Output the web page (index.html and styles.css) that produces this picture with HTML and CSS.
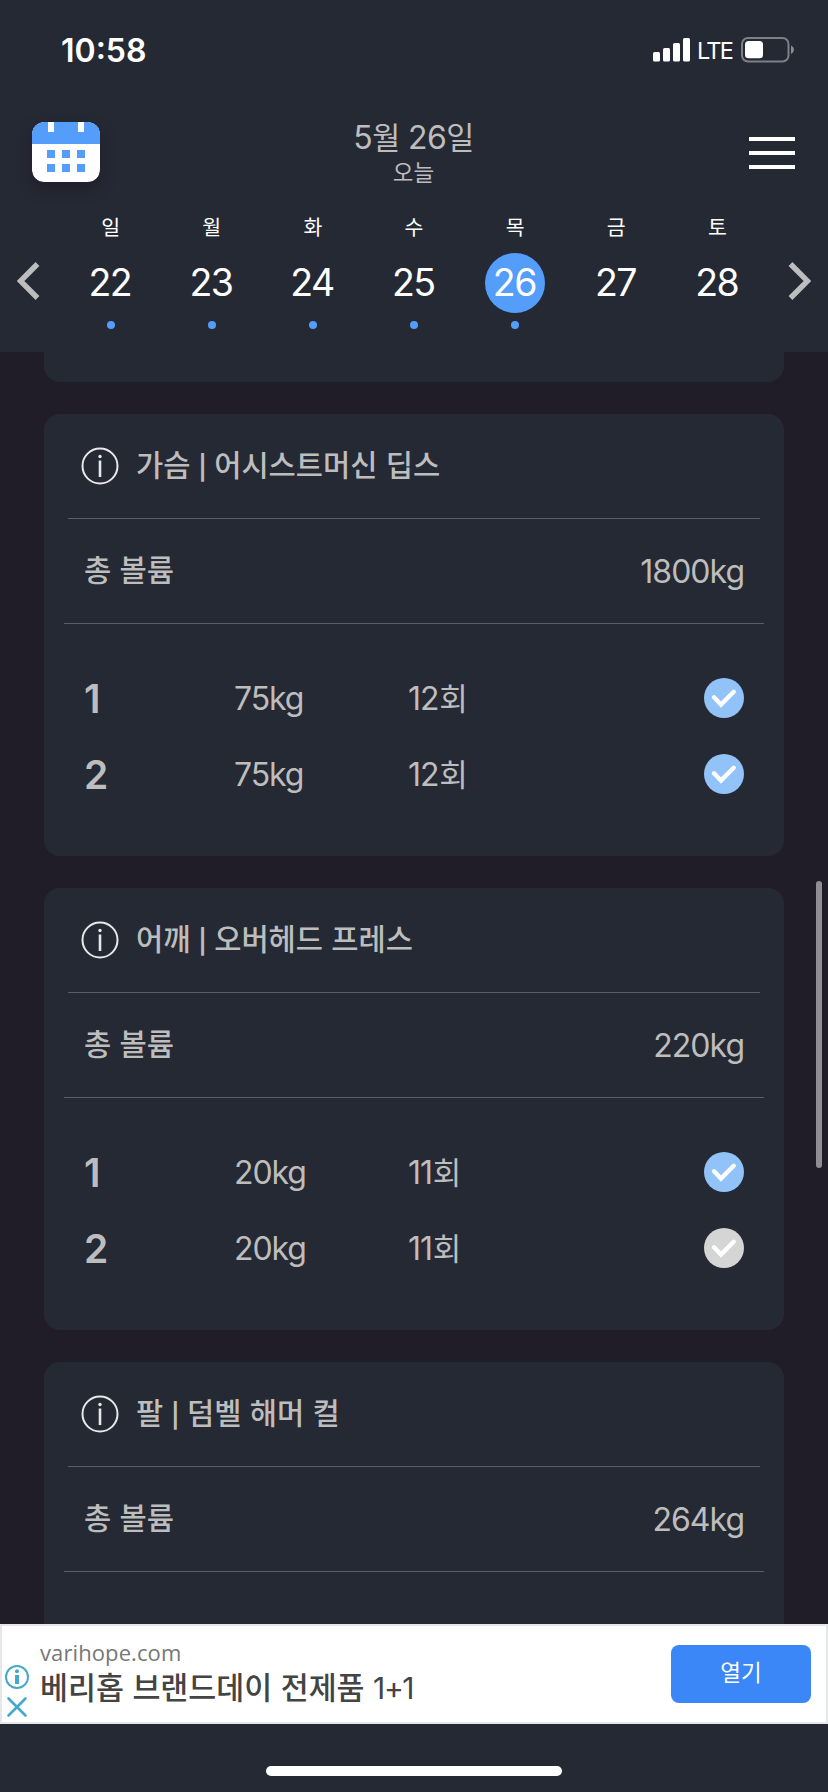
FILE: index.html
```html
<!DOCTYPE html>
<html lang="ko">
<head>
    <meta charset="utf-8">
    <title>운동 기록</title>
    <link rel="stylesheet" href="styles.css">
</head>
<body>
<svg class="defs" width="0" height="0">
    <symbol id="info" viewBox="0 0 40 40">
        <circle cx="20" cy="20" r="17.5" fill="none" stroke="#e8e8ea" stroke-width="2"/>
        <circle cx="20" cy="10.5" r="1.7" fill="#e8e8ea"/>
        <path d="M20 14.5V31" stroke="#e8e8ea" stroke-width="2.6"/>
    </symbol>
    <symbol id="check" viewBox="0 0 40 40">
        <circle cx="20" cy="20" r="20" fill="currentColor"/>
        <path d="M10 19.3L17 26.5L29.7 13.8" fill="none" stroke="#fff" stroke-width="4.4" stroke-linecap="round"/>
    </symbol>
</svg>

<div class="app">
    <header class="header">
        <div class="status">
            <span class="time">10:58</span>
            <div class="status-right">
                <svg width="38" height="24" viewBox="0 0 38 24" fill="#fff">
                    <rect x="0" y="14" width="7" height="9.5" rx="1.5"/>
                    <rect x="10" y="10" width="7" height="13.5" rx="1.5"/>
                    <rect x="20" y="5" width="7" height="18.5" rx="1.5"/>
                    <rect x="30" y="0" width="7" height="23.5" rx="1.5"/>
                </svg>
                <span class="lte">LTE</span>
                <svg width="54" height="26" viewBox="0 0 54 26">
                    <rect x="1" y="1" width="46.5" height="23.5" rx="6" fill="none" stroke="#7d8087" stroke-width="2"/>
                    <rect x="4" y="4" width="18" height="17.3" rx="3.5" fill="#fff"/>
                    <path d="M50 8.5Q53 10 53 12.8T50 17Z" fill="#8b8e94"/>
                </svg>
            </div>
        </div>

        <div class="titlebar">
            <svg class="cal" width="68" height="60" viewBox="0 0 68 60">
                <rect width="68" height="60" rx="12" fill="#fff"/>
                <path d="M0 22V12A12 12 0 0 1 12 0H56A12 12 0 0 1 68 12V22Z" fill="#549dfb"/>
                <path d="M16 0h6v10h-6zM46 0h6v10h-6z" fill="#fff"/>
                <path d="M15 28h8v8h-8zM30 28h8v8h-8zM45 28h8v8h-8zM15 42h8v8h-8zM30 42h8v8h-8zM45 42h8v8h-8z" fill="#549dfb"/>
            </svg>
            <div class="title">
                <div class="date">5<span class="ko">월</span> 26<span class="ko">일</span></div>
                <div class="today">오늘</div>
            </div>
            <svg class="menu" width="46" height="34" viewBox="0 0 46 34">
                <path d="M0 3H46M0 17H46M0 31H46" stroke="#fff" stroke-width="4"/>
            </svg>
        </div>

        <div class="week">
            <svg class="arrow" width="24" height="38" viewBox="0 0 24 38"><path d="M20.5 2L3.5 19L20.5 36" fill="none" stroke="#bdbdbd" stroke-width="5.4"/></svg>
            <div class="days">
                <div class="day"><span class="name">일</span><span class="num">22</span><i class="dot"></i></div>
                <div class="day"><span class="name">월</span><span class="num">23</span><i class="dot"></i></div>
                <div class="day"><span class="name">화</span><span class="num">24</span><i class="dot"></i></div>
                <div class="day"><span class="name">수</span><span class="num">25</span><i class="dot"></i></div>
                <div class="day"><span class="name">목</span><span class="num on">26</span><i class="dot"></i></div>
                <div class="day"><span class="name">금</span><span class="num">27</span></div>
                <div class="day"><span class="name">토</span><span class="num">28</span></div>
            </div>
            <svg class="arrow" width="24" height="38" viewBox="0 0 24 38"><path d="M3.5 2L20.5 19L3.5 36" fill="none" stroke="#bdbdbd" stroke-width="5.4"/></svg>
        </div>
    </header>

    <main class="list">
        <section class="card prev"></section>

        <section class="card">
            <div class="card-head"><svg class="info"><use href="#info"/></svg><h2>가슴 <span class="bar">|</span> 어시스트머신 딥스</h2></div>
            <div class="volume"><span class="label">총 볼륨</span><span class="value">1800kg</span></div>
            <div class="sets">
                <div class="set"><b>1</b><span>75kg</span><span>12<span class="ko">회</span></span><svg class="check"><use href="#check"/></svg></div>
                <div class="set"><b>2</b><span>75kg</span><span>12<span class="ko">회</span></span><svg class="check"><use href="#check"/></svg></div>
            </div>
        </section>

        <section class="card">
            <div class="card-head"><svg class="info"><use href="#info"/></svg><h2>어깨 <span class="bar">|</span> 오버헤드 프레스</h2></div>
            <div class="volume"><span class="label">총 볼륨</span><span class="value">220kg</span></div>
            <div class="sets">
                <div class="set"><b>1</b><span>20kg</span><span>11<span class="ko">회</span></span><svg class="check"><use href="#check"/></svg></div>
                <div class="set"><b>2</b><span>20kg</span><span>11<span class="ko">회</span></span><svg class="check off"><use href="#check"/></svg></div>
            </div>
        </section>

        <section class="card">
            <div class="card-head"><svg class="info"><use href="#info"/></svg><h2>팔 <span class="bar">|</span> 덤벨 해머 컬</h2></div>
            <div class="volume"><span class="label">총 볼륨</span><span class="value">264kg</span></div>
            <div class="sets"></div>
        </section>
        <div class="scrollbar"></div>
    </main>

    <aside class="ad">
        <div class="ad-marks">
            <svg width="24" height="24" viewBox="0 0 24 24">
                <circle cx="12" cy="12" r="11" fill="none" stroke="#46a9cb" stroke-width="2"/>
                <circle cx="12" cy="6.3" r="2" fill="#46a9cb"/>
                <path d="M12 10V19" stroke="#46a9cb" stroke-width="4"/>
            </svg>
            <svg width="24" height="24" viewBox="0 0 24 24"><path d="M3.5 3.500L20.500 20.500M20.500 3.500L3.500 20.500" stroke="#46a9cb" stroke-width="2.600" stroke-linecap="round"/></svg>
        </div>
        <div class="ad-text">
            <div class="ad-url">varihope.com</div>
            <div class="ad-title">베리홉 브랜드데이 전제품 <span class="plus">1+1</span></div>
        </div>
        <button class="ad-btn">열기</button>
    </aside>

    <footer class="home"><div class="home-bar"></div></footer>
</div>
</body>
</html>
```
FILE: styles.css
```css
*{
    box-sizing:border-box;
}
body{
    margin:0;
    background:#201d29;
    color:#bdbdbd;
    font-family:Inter, "Noto Sans CJK KR", sans-serif;
}
.defs{
    position:absolute;
}
.app{
    width:828px;
    height:1792px;
    display:flex;
    flex-direction:column;
    overflow:hidden;
}
.header{
    height:352px;
    flex:none;
    background:#252934;
}
.status{
    height:100px;
    padding:0 33px 0 61px;
    display:flex;
    align-items:center;
    justify-content:space-between;
    color:#fff;
}
.time{
    font-size:32px;
    font-weight:600;
}
.status-right{
    display:flex;
    align-items:center;
}
.lte{
    margin:2px 9px 0 6px;
    font-size:23.5px;
    line-height:24px;
    letter-spacing:-1.8px;
}
.titlebar{
    height:104px;
    padding:0 33px 0 32px;
    display:grid;
    grid-template-columns:1fr auto 1fr;
    align-items:center;
}
.cal{
    border-radius:12px;
    box-shadow:0 6px 14px rgba(32,25,35,.7);
}
.title{
    padding-top:1px;
    text-align:center;
}
.date{
    font-size:32px;
    line-height:40px;
    letter-spacing:-0.6px;
}
.ko{
    font-family:"Noto Sans CJK KR", sans-serif;
    font-size:30.5px;
    line-height:1;
}
.today{
    font-size:22.5px;
    line-height:30px;
}
.menu{
    justify-self:end;
    margin-top:2px;
}
.week{
    height:148px;
    padding:0 17px;
    display:flex;
    justify-content:space-between;
}
.arrow{
    margin-top:58px;
}
.days{
    width:708px;
    display:grid;
    grid-template-columns:repeat(7,1fr);
    color:#fff;
}
.day{
    display:flex;
    flex-direction:column;
    align-items:center;
}
.name{
    height:49px;
    padding-top:9px;
    font-size:20.5px;
    line-height:30px;
}
.num{
    width:60px;
    height:60px;
    border-radius:50%;
    font-size:37.5px;
    line-height:60px;
    letter-spacing:-1.5px;
    text-indent:-1.5px;
    text-align:center;
}
.on{
    background:#549dfb;
}
.dot{
    width:8px;
    height:8px;
    margin-top:8px;
    border-radius:50%;
    background:#549dfb;
}
.list{
    position:relative;
    height:1272px;
    flex:none;
    padding:0 44px;
    overflow:hidden;
}
.card{
    height:442px;
    margin-bottom:32px;
    border-radius:16px;
    background:#252934;
}
.prev{
    height:30px;
    border-radius:0 0 16px 16px;
}
.card-head{
    height:105px;
    margin:0 24px;
    padding-left:12px;
    display:flex;
    align-items:center;
    border-bottom:1px solid #5b5c66;
}
.info{
    width:40px;
    height:40px;
}
h2{
    margin:0 0 0 16px;
    padding-bottom:4px;
    font:500 29.6px/40px "Noto Sans CJK KR", sans-serif;
}
.bar{
    margin:0 -1px 0 -0.5px;
    font-family:Inter, sans-serif;
    font-size:24px;
    font-weight:600;
    line-height:1;
}
.volume{
    height:105px;
    margin:0 20px;
    padding:0 20px;
    display:flex;
    align-items:center;
    justify-content:space-between;
    border-bottom:1px solid #5b5c66;
}
.label{
    padding-bottom:4px;
    font:500 29.6px/40px "Noto Sans CJK KR", sans-serif;
}
.value{
    font-size:32px;
    letter-spacing:-1px;
}
.sets{
    padding:36px 40px 0;
}
.set{
    height:76px;
    display:grid;
    grid-template-columns:150px 174px 1fr 40px;
    align-items:center;
    font-size:32px;
    letter-spacing:-1.1px;
}
.set .ko{
    margin-left:1px;
    font-size:31px;
}
.set b{
    font-size:39px;
    font-weight:600;
}
.check{
    width:40px;
    height:40px;
    color:#91c3f9;
}
.off{
    color:#d5d5d5;
}
.scrollbar{
    position:absolute;
    top:529px;
    right:6px;
    width:6px;
    height:287px;
    border-radius:3px;
    background:#908e94;
}
.ad{
    height:100px;
    flex:none;
    padding:0 15px 0 3px;
    display:flex;
    align-items:center;
    border:2px solid #e5e7e8;
    background:#fff;
}
.ad-marks{
    padding-top:36px;
    display:flex;
    flex-direction:column;
    gap:6px;
}
.ad-text{
    flex:1;
    padding:0 0 4px 11px;
}
.ad-url{
    color:#777;
    font:400 22px/28px "Open Sans", sans-serif;
    letter-spacing:0.1px;
}
.ad-title{
    color:#444;
    font:500 30.4px/40px "Noto Sans CJK KR", sans-serif;
}
.plus{
    font:400 30px/1 Inter, sans-serif;
    letter-spacing:-1.4px;
}
.ad-btn{
    width:140px;
    height:58px;
    padding:0 0 6px;
    border:0;
    border-radius:8px;
    background:#3b87f7;
    color:#fff;
    font:400 22.5px/30px "Noto Sans CJK KR", sans-serif;
}
.home{
    flex:1;
    padding-top:42px;
    background:#252934;
}
.home-bar{
    width:296px;
    height:10px;
    margin:0 auto;
    border-radius:5px;
    background:#fff;
}
```
